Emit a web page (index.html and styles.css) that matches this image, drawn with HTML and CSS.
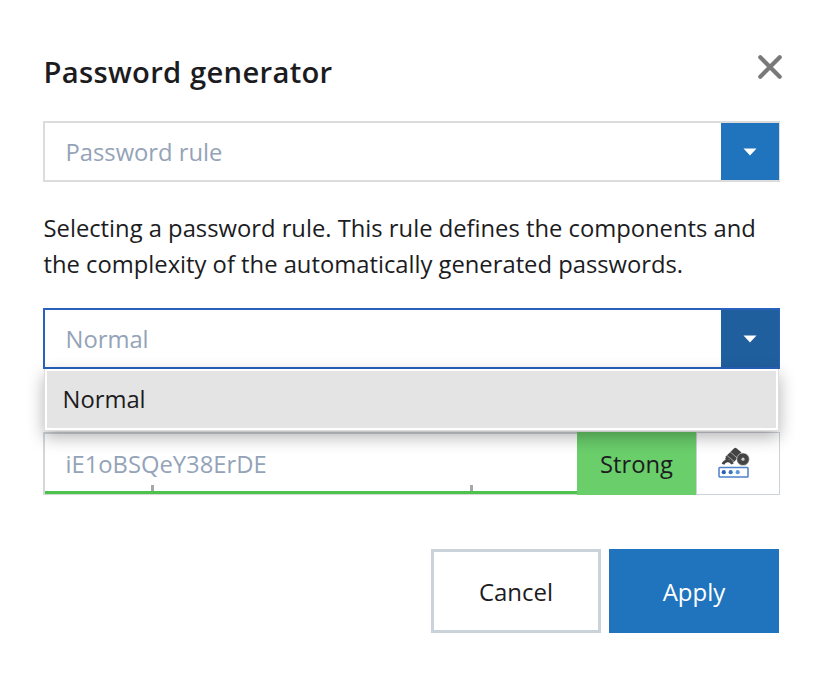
FILE: index.html
```html
<!DOCTYPE html>
<html lang="en">
<head>
<meta charset="utf-8">
<title>Password generator</title>
<link rel="stylesheet" href="styles.css">
</head>
<body>
<main class="dialog">
  <header class="head">
    <h1><span>Password generator</span></h1>
    <button class="close" aria-label="Close"><svg width="26" height="26" viewBox="0 0 26 26"><path d="M3.3 3.3 22.7 22.7M22.7 3.3 3.3 22.7"/></svg></button>
  </header>
  <div class="select">
    <span class="value">Password rule</span>
    <button class="arrow" aria-label="Open"><svg width="14" height="8" viewBox="0 0 14 8"><path d="M0.5 0.5H13.5L7 7.5Z"/></svg></button>
  </div>
  <p class="help">Selecting a password rule. This rule defines the components and<br>the complexity of the automatically generated passwords.</p>
  <div class="select active">
    <span class="value">Normal</span>
    <button class="arrow" aria-label="Open"><svg width="14" height="8" viewBox="0 0 14 8"><path d="M0.5 0.5H13.5L7 7.5Z"/></svg></button>
    <div class="menu"><div class="option">Normal</div></div>
  </div>
  <div class="password">
    <div class="field"><span>iE1oBSQeY38ErDE</span><i class="tick low"></i><i class="tick high"></i></div>
    <div class="strength">Strong</div>
    <button class="generate" aria-label="Generate password">
      <svg width="32" height="32" viewBox="0 0 32 32">
        <path class="ink" d="M7.2 10 16.2 1.2Q17.3.2 18.5 1.2L23.5 5.5 16 15.2Z"/>
        <path class="gap" d="M12 4.8 19.5 11.2M8.7 8.3 17 15"/>
        <circle class="ink ring" cx="25" cy="12.2" r="6.3"/>
        <circle class="hole" cx="25" cy="12.2" r="1.6"/>
        <path class="claw" d="M5 17.3C6.5 12.8 12.3 12.5 14.5 17M10 13 8 10.8"/>
        <rect class="frame" x="1" y="20.5" width="29" height="9.5" rx=".8"/>
        <circle class="dot one" cx="5.8" cy="25.2" r="2.1"/>
        <circle class="dot two" cx="12.7" cy="25.2" r="2.1"/>
        <circle class="dot three" cx="19.7" cy="25.2" r="2.1"/>
      </svg>
    </button>
  </div>
  <footer class="actions">
    <button class="cancel">Cancel</button>
    <button class="apply">Apply</button>
  </footer>
</main>
</body>
</html>
```
FILE: styles.css
```css
* { box-sizing: border-box; }
body {
  margin: 0;
  background: #fff;
  color: #1c1c1f;
  font: 23.77px/36px "Open Sans", "Noto Sans", sans-serif;
}
button {
  margin: 0;
  padding: 0;
  border: 0;
  background: none;
  color: inherit;
  font: inherit;
}
svg { display: block; }
.dialog { width: 826px; height: 687px; padding: 53px 46px 0 43px; }
.head { display: flex; justify-content: space-between; height: 68px; }
h1 {
  margin: -1px 0 0 .5px;
  font-size: 29.2px;
  line-height: 40px;
  font-weight: 560;
  word-spacing: .5px;
  letter-spacing: .3px;
}
.close { width: 26px; height: 26px; margin: 1px -2.5px 0 0; }
.close path { stroke: #797979; stroke-width: 4.2; stroke-linecap: round; }
.select {
  position: relative;
  display: flex;
  height: 61px;
  border: 2px solid #dcdcdc;
  border-right-width: 1px;
}
.value { flex: 1; padding: 11px 0 0 20.5px; color: #94a3b8; }
.arrow {
  display: flex;
  align-items: center;
  justify-content: center;
  width: 58px;
  background: #2074be;
}
.arrow path { fill: #fff; }
.help { margin: 28px 0 26px .5px; height: 72px; white-space: nowrap; }
.active { border-color: #2862bd; }
.active .arrow { background: #205f9e; }
.menu {
  position: absolute;
  z-index: 2;
  top: 59px;
  left: -1px;
  right: 0;
  height: 62px;
  padding: 2px;
  background: #fff;
  border: 1px solid #dedede;
  border-top: 0;
  box-shadow: 0 6px 16px rgba(0, 0, 0, .3);
}
.option { height: 57px; padding: 10px 15.5px; background: #e4e4e4; }
.password { display: flex; height: 63px; margin-top: 63px; }
.field {
  position: relative;
  flex: 1;
  padding: 12px 0 0 20.5px;
  border: solid #d3d7da;
  border-width: 2px 0 1px 2px;
  color: #94a3b8;
  box-shadow: inset 0 -3px #4dc34d;
}
.tick { position: absolute; bottom: 3px; width: 3px; height: 6px; background: #a1aaa6; }
.low { left: 106px; }
.high { left: 425px; }
.strength { width: 119px; padding-top: 14px; text-align: center; background: #6ace6b; }
.generate {
  display: flex;
  justify-content: center;
  width: 84px;
  padding-top: 14px;
  border: 1.5px solid #ced3da;
}
.generate svg { margin-right: 8px; }
.ink { fill: #444; }
.gap { stroke: #ddd; stroke-width: .6; }
.ring { stroke: #eee; stroke-width: .6; }
.hole { fill: #ccc; }
.claw { fill: none; stroke: #444; stroke-width: 2.8; }
.frame { fill: #fff; stroke: #4d81c9; stroke-width: 1.5; }
.one { fill: #315faf; }
.two { fill: #3974bc; }
.three { fill: #5b9ad8; }
.actions { display: flex; justify-content: flex-end; gap: 8px; margin: 54px 1px 0 0; }
.actions button { width: 170px; height: 84px; padding-top: 1px; font-size: 24px; }
.cancel { border: 3px solid #cbd3da; }
.apply { background: #2074be; color: #fff; }
```
